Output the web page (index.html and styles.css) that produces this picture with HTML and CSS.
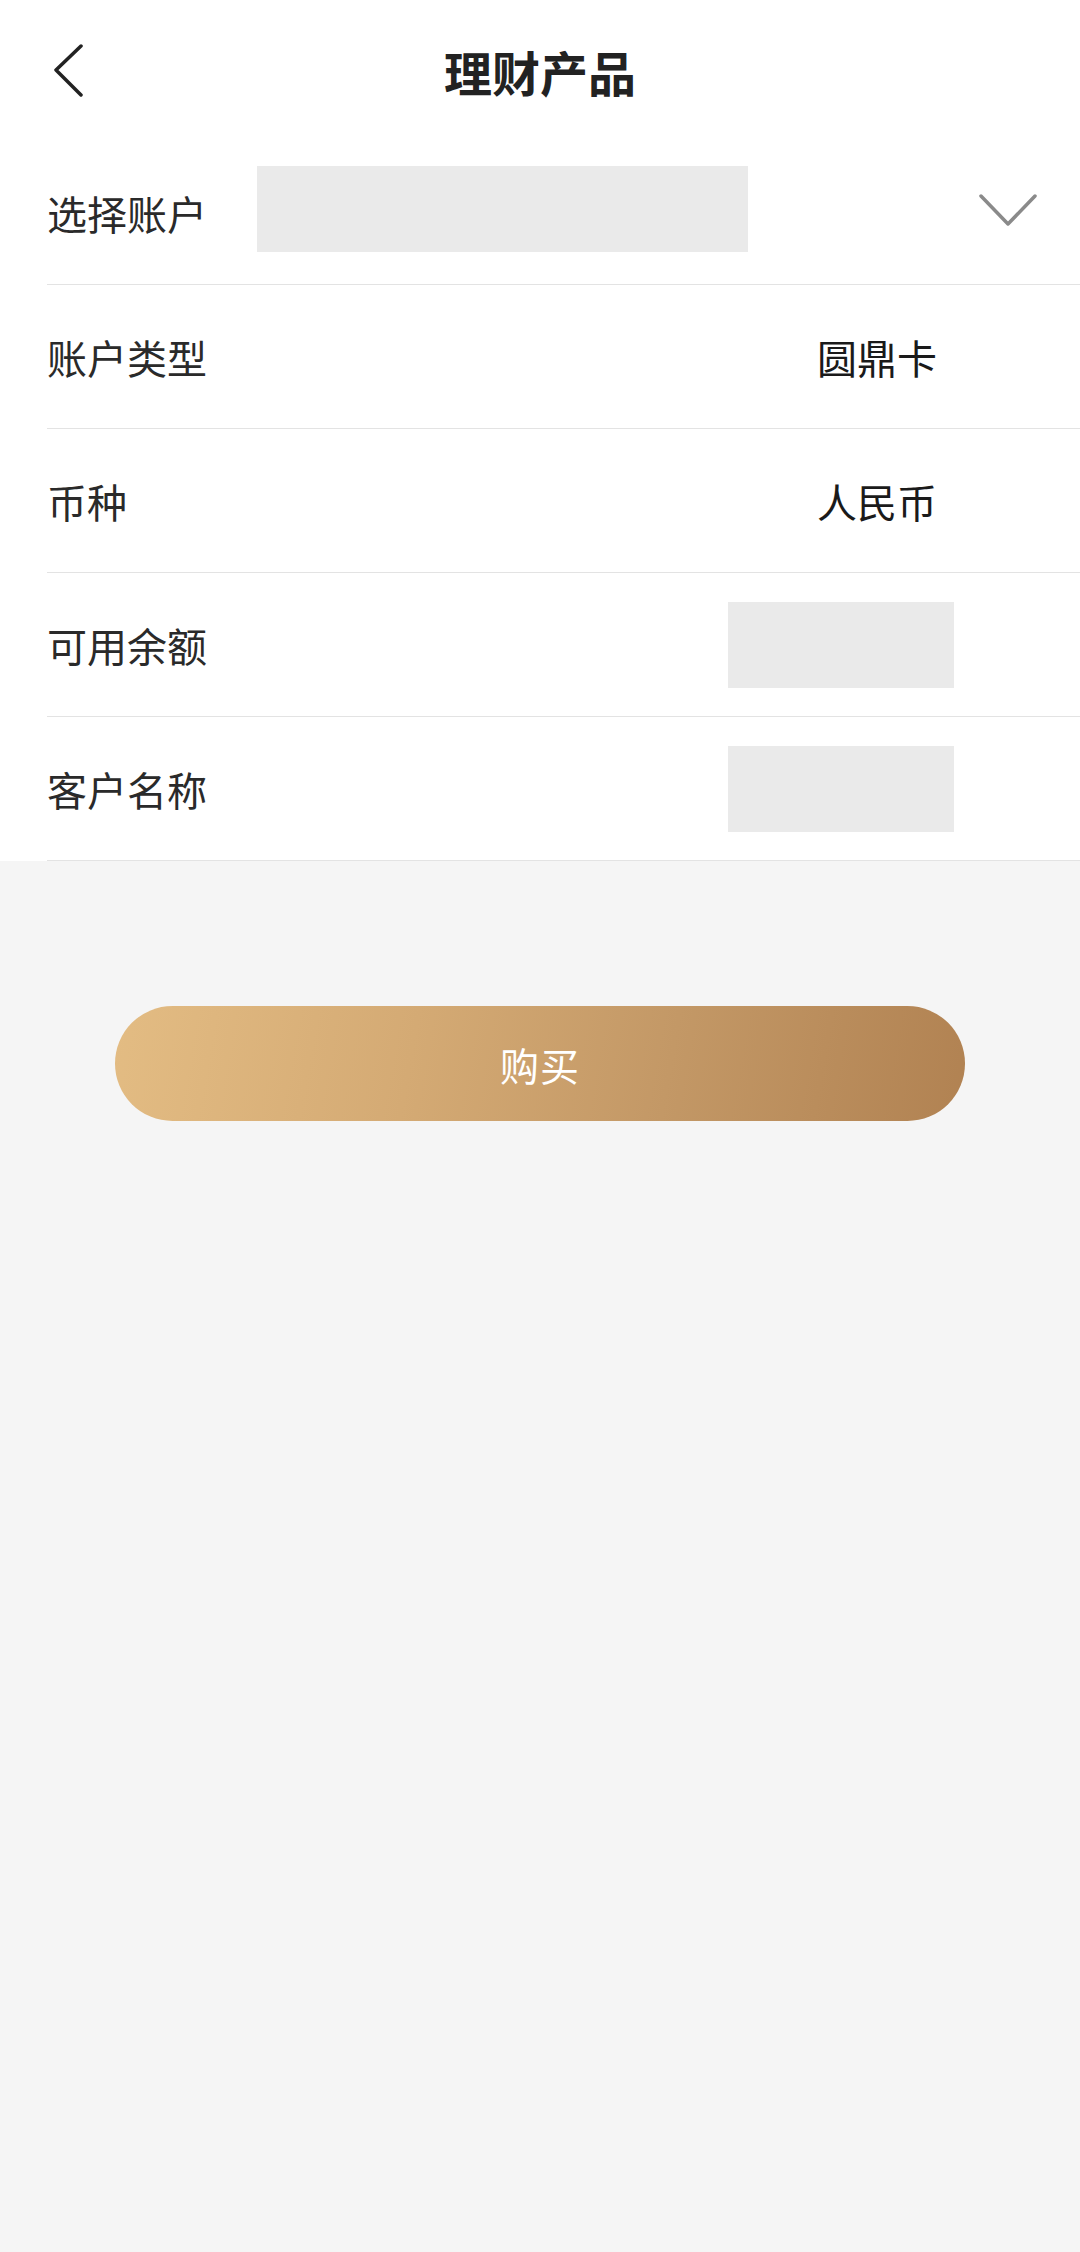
FILE: index.html
```html
<!DOCTYPE html>
<html lang="zh-CN">
<head>
    <meta charset="UTF-8">
    <meta name="viewport" content="width=device-width, initial-scale=1.0">
    <title>理财产品</title>
    <link rel="stylesheet" href="styles.css">
</head>
<body>

    <div class="page">
        <!-- Header -->
        <div class="header">
            <a class="back" href="#">
                <svg width="32" height="54" viewBox="0 0 32 54">
                    <path d="M29 2 L4 26 L29 51" fill="none" stroke="#222" stroke-width="3.5" stroke-linecap="round" stroke-linejoin="round"/>
                </svg>
            </a>
            <h1>理财产品</h1>
        </div>

        <!-- Account info -->
        <div class="info">
            <div class="row">
                <span class="label">选择账户</span>
                <span class="mask mask-wide"></span>
                <svg class="arrow" width="58" height="34" viewBox="0 0 58 34">
                    <path d="M2 3 L29 31 L56 3" fill="none" stroke="#8a8a8a" stroke-width="3.5" stroke-linecap="round" stroke-linejoin="round"/>
                </svg>
            </div>
            <div class="row">
                <span class="label">账户类型</span>
                <span class="value">圆鼎卡</span>
            </div>
            <div class="row">
                <span class="label">币种</span>
                <span class="value">人民币</span>
            </div>
            <div class="row">
                <span class="label">可用余额</span>
                <span class="mask mask-small"></span>
            </div>
            <div class="row">
                <span class="label">客户名称</span>
                <span class="mask mask-small"></span>
            </div>
        </div>

        <!-- Buy button -->
        <div class="actions">
            <button class="buy">购买</button>
        </div>
    </div>

</body>
</html>
```

FILE: styles.css
```css
body {
    font-family: "Noto Sans CJK SC", "Noto Sans", sans-serif;
    background-color: #f5f5f5;
    margin: 0;
    padding: 0;
    color: #222;
}
.page {
    width: 1080px;
    min-height: 2252px;
}
.header {
    height: 141px;
    background-color: #fff;
    display: flex;
    align-items: center;
    justify-content: center;
    position: relative;
}
.back {
    position: absolute;
    left: 52px;
    top: 44px;
    display: block;
    width: 32px;
    height: 54px;
}
.back svg {
    display: block;
}
.header h1 {
    margin: 0;
    font-size: 48px;
    font-weight: bold;
    color: #222;
    line-height: 1;
    margin-top: -68px;
    position: relative;
    top: 34px;
}
.info {
    background-color: #fff;
    padding-left: 47px;
}
.row {
    height: 143px;
    border-bottom: 1.5px solid #e3e3e3;
    display: flex;
    align-items: center;
    padding-right: 43px;
}
.label {
    font-size: 40px;
    color: #2a2a2a;
    width: 210px;
    line-height: 1;
}
.value {
    margin-left: auto;
    margin-right: 100px;
    font-size: 40px;
    color: #1a1a1a;
    line-height: 1;
}
.mask {
    background-color: #eaeaea;
    height: 86px;
}
.mask-wide {
    width: 491px;
    margin-bottom: 8px;
}
.mask-small {
    width: 226px;
    margin-left: auto;
    margin-right: 83px;
}
.row .arrow {
    margin-left: auto;
    margin-bottom: 6px;
    display: block;
}
.actions {
    padding: 145px 115px 0;
}
.buy {
    display: block;
    width: 100%;
    height: 115px;
    border: none;
    border-radius: 58px;
    background: linear-gradient(100deg, #e3bc83 0%, #d4aa74 35%, #c39866 65%, #b18252 100%);
    color: #fff;
    font-family: "Noto Sans CJK SC", "Noto Sans", sans-serif;
    font-size: 39px;
    letter-spacing: 1px;
}
```
